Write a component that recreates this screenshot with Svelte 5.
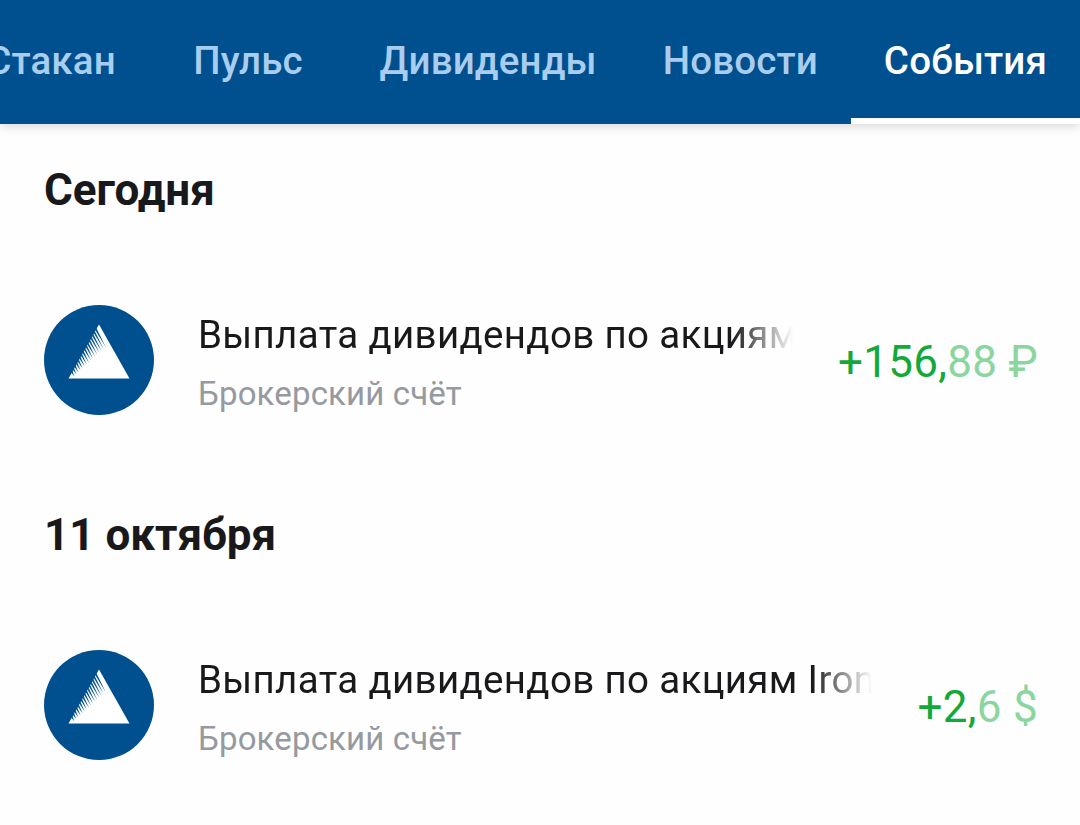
<script lang="ts">
    type Payout = { title: string; account: string; whole: string; rest: string };
    type Day = { label: string; payouts: Payout[] };

    const tabs = ["Стакан", "Пульс", "Дивиденды", "Новости", "События"];
    let active = $state("События");

    const days: Day[] = [
        {
            label: "Сегодня",
            payouts: [
                {
                    title: "Выплата дивидендов по акциям",
                    account: "Брокерский счёт",
                    whole: "+156,",
                    rest: "88 ₽",
                },
            ],
        },
        {
            label: "11 октября",
            payouts: [
                {
                    title: "Выплата дивидендов по акциям Iron",
                    account: "Брокерский счёт",
                    whole: "+2,",
                    rest: "6 $",
                },
            ],
        },
    ];

    // Hatching along the left edge of the mountain, from the foot to the peak
    const hatches = Array.from({ length: 16 }, (_, i) => {
        const x = 28 + i * 1.6;
        const y = 73.5 - (x - 24.5) * 1.77;
        const len = 4 + i * 0.9;
        return `M${x - 0.8} ${y + 0.2}l1.1 -1.95L${x + len * 0.56} ${y + len}z`;
    });
</script>

<div class="screen">
    <nav class="tabs">
        {#each tabs as tab}
            <button
                class="tab"
                class:active={tab === active}
                onclick={() => (active = tab)}>{tab}</button
            >
        {/each}
    </nav>

    <main>
        {#each days as day}
            <section class="day">
                <h2>{day.label}</h2>
                {#each day.payouts as payout}
                    <div class="payout">
                        <svg class="logo" viewBox="0 0 110 110" aria-hidden="true">
                            <circle cx="55" cy="55" r="55" fill="#00508f" />
                            <path d="M55 19.5L85.5 73.5H24.5Z" fill="#fff" />
                            {#each hatches as d}
                                <path {d} fill="#00508f" />
                            {/each}
                        </svg>
                        <div class="info">
                            <div class="title">{payout.title}</div>
                            <div class="account">{payout.account}</div>
                        </div>
                        <div class="amount">
                            {payout.whole}<span class="rest">{payout.rest}</span>
                        </div>
                    </div>
                {/each}
            </section>
        {/each}
    </main>
</div>

<style>
    :global(body) {
        margin: 0;
        background: #fefefe;
    }

    .screen {
        height: 825px;
        overflow: hidden;
        font-family: Roboto, sans-serif;
        color: #19191b;
    }

    .tabs {
        display: flex;
        justify-content: flex-end;
        height: 124px;
        background: #00508f;
        box-shadow: 0 2px 10px rgba(0, 0, 0, 0.16);
    }

    .tab {
        flex: none;
        box-sizing: border-box;
        min-width: 197px;
        padding: 5px 33px 0;
        border: 0;
        border-bottom: 6px solid transparent;
        background: none;
        color: #a9cdee;
        font: 500 38.5px/1 Roboto, sans-serif;
        letter-spacing: 0.15px;
        white-space: nowrap;
    }

    .tab.active {
        border-bottom-color: #fff;
        color: #fff;
    }

    .day {
        box-sizing: border-box;
        height: 345px;
        padding: 40px 42px 0 44px;
    }

    h2 {
        margin: 0 0 89px;
        font-size: 44px;
        font-weight: 700;
        line-height: 52px;
    }

    .payout {
        display: flex;
        align-items: center;
        height: 110px;
    }

    .logo {
        flex: none;
        width: 110px;
        height: 110px;
    }

    .info {
        flex: 1;
        min-width: 0;
        margin: 0 45px 0 44px;
        padding-top: 4px;
    }

    .title {
        overflow: hidden;
        font-size: 38.5px;
        line-height: 50px;
        letter-spacing: 0.34px;
        white-space: nowrap;
        mask-image: linear-gradient(to left, transparent, #000 60px);
    }

    .account {
        margin-top: 14px;
        color: #969a9f;
        font-size: 33px;
        line-height: 40px;
        letter-spacing: 0.15px;
    }

    .amount {
        color: #12a83a;
        font-size: 44px;
        line-height: 52px;
        letter-spacing: 0.3px;
        padding-top: 4px;
        white-space: nowrap;
    }

    .rest {
        color: #8bd59e;
    }
</style>
